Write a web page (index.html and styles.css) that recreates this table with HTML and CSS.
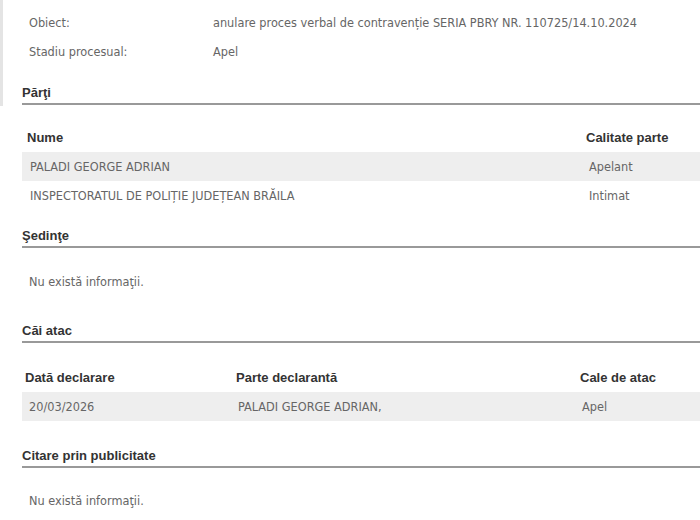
FILE: index.html
```html
<!DOCTYPE html>
<html lang="ro">
<head>
<meta charset="utf-8">
<link rel="stylesheet" href="styles.css">
</head>
<body>
<div class="side"></div>
<main class="page">
  <div class="info">
    <div class="info-row"><span class="label">Obiect:</span><span class="value">anulare proces verbal de contravenție SERIA PBRY NR. 110725/14.10.2024</span></div>
    <div class="info-row"><span class="label">Stadiu procesual:</span><span class="value">Apel</span></div>
  </div>

  <h3 class="section-title s-parti">Părţi</h3>
  <table class="grid parti">
    <colgroup><col class="w-nume"><col class="w-cal"></colgroup>
    <thead><tr><th>Nume</th><th>Calitate parte</th></tr></thead>
    <tbody>
      <tr class="alt"><td>PALADI GEORGE ADRIAN</td><td>Apelant</td></tr>
      <tr><td>INSPECTORATUL DE POLIȚIE JUDEȚEAN BRĂILA</td><td>Intimat</td></tr>
    </tbody>
  </table>

  <h3 class="section-title s-sedinte">Şedinţe</h3>
  <p class="empty e1">Nu există informaţii.</p>

  <h3 class="section-title s-cai">Căi atac</h3>
  <table class="grid cai">
    <colgroup><col class="w-data"><col class="w-parte"><col class="w-cale"></colgroup>
    <thead><tr><th>Dată declarare</th><th>Parte declarantă</th><th>Cale de atac</th></tr></thead>
    <tbody>
      <tr class="alt"><td class="c-data">20/03/2026</td><td>PALADI GEORGE ADRIAN,</td><td>Apel</td></tr>
    </tbody>
  </table>

  <h3 class="section-title s-citare">Citare prin publicitate</h3>
  <p class="empty e2">Nu există informaţii.</p>
</main>
</body>
</html>
```

FILE: styles.css
```css
html, body {
  margin: 0;
  padding: 0;
  background: #fff;
}
body {
  font-family: "DejaVu Sans Condensed", "DejaVu Sans", sans-serif;
  font-size: 12.6px;
  color: #666;
}
.side {
  position: absolute;
  left: 0;
  top: 0;
  width: 3px;
  height: 106px;
  background: #e4e4e4;
}
.page {
  padding-left: 22px;
  padding-top: 8px;
}
.info-row {
  display: flex;
  height: 29px;
  align-items: center;
}
.label {
  width: 184px;
  padding-left: 7px;
}
.section-title {
  margin: 0;
  font-family: "Liberation Sans", Arial, sans-serif;
  font-size: 13px;
  font-weight: bold;
  color: #333;
  height: 20px;
  line-height: 20px;
  border-bottom: 2px solid #999;
}
.s-parti { margin-top: 17px; }
.s-sedinte { margin-top: 16px; }
.s-cai { margin-top: 27px; }
.s-citare { margin-top: 25px; }
.grid {
  width: 100%;
  table-layout: fixed;
  border-collapse: collapse;
  margin-top: 17px;
}
.grid th {
  font-family: "Liberation Sans", Arial, sans-serif;
  font-size: 13px;
  font-weight: bold;
  color: #333;
  text-align: left;
  height: 30px;
  padding: 0 5px;
}
.grid td {
  height: 29px;
  padding: 0 8px;
  white-space: nowrap;
}
.grid tr.alt td {
  background: #eeeeee;
}
.w-nume { width: 559px; }
.w-cal { width: 119px; }
.w-data { width: 211px; }
.w-parte { width: 344px; }
.w-cale { width: 123px; }
.cai { margin-top: 19px; }
.cai th { padding-left: 3px; }
.cai td { padding-left: 5px; }
.cai td.c-data { padding-left: 7px; }
.empty {
  margin: 0;
  padding-left: 7px;
  height: 24px;
  line-height: 24px;
}
.e1 { margin-top: 22px; }
.e2 { margin-top: 21px; }
```
